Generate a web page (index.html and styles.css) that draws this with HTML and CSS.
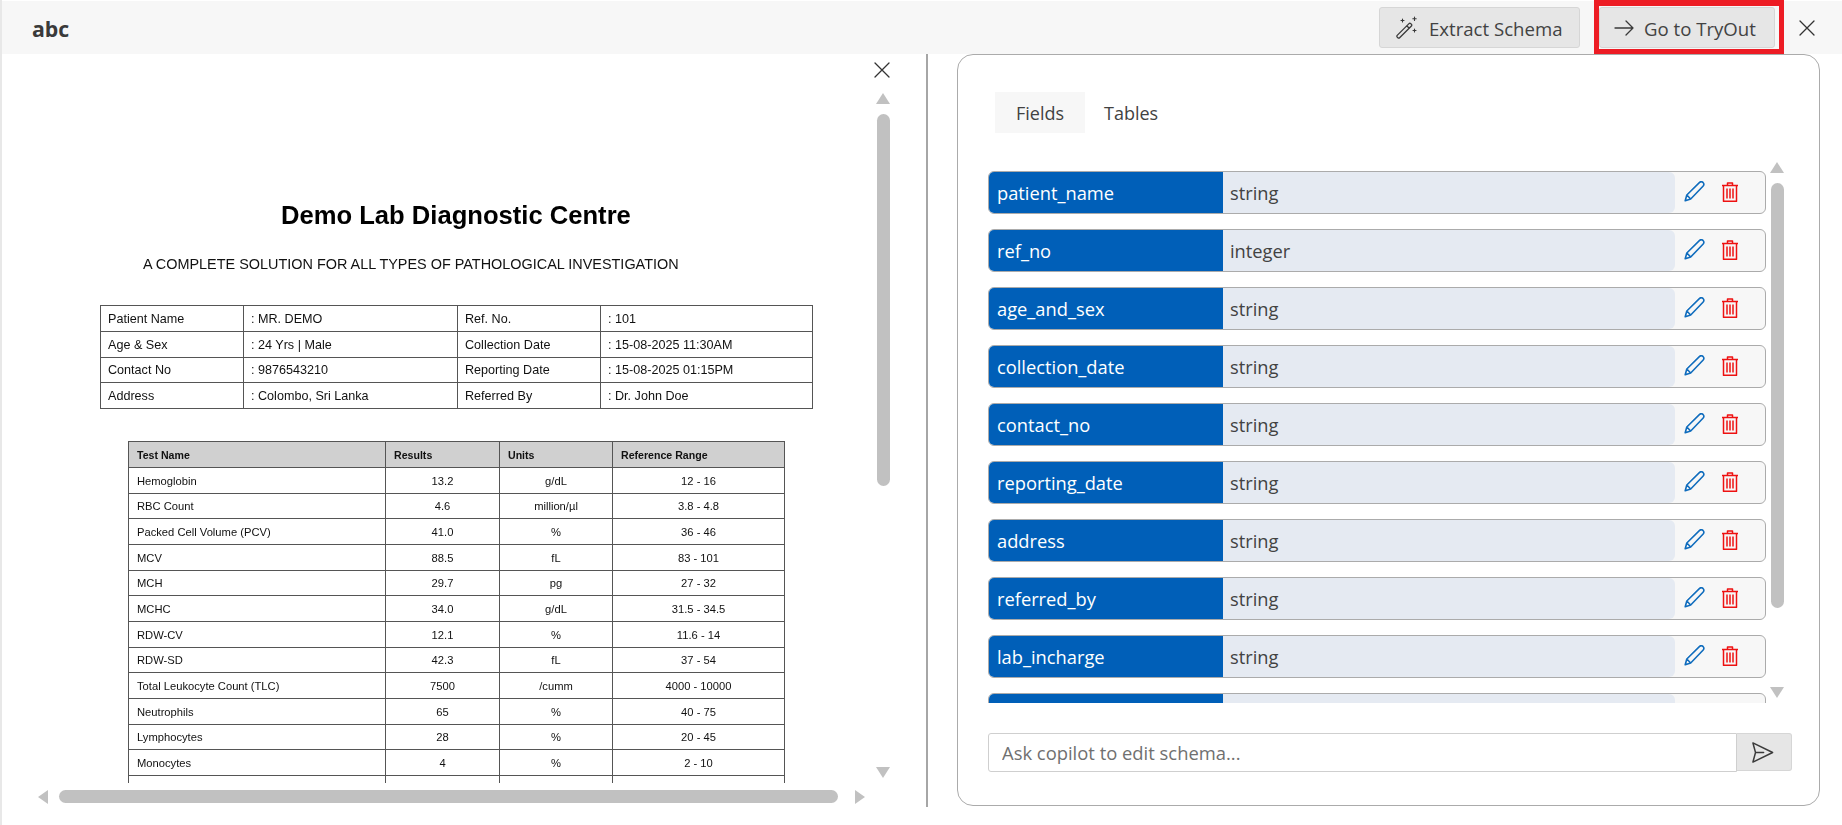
FILE: index.html
```html
<!DOCTYPE html>
<html lang="en">
<head>
<meta charset="utf-8">
<title>abc</title>
<link rel="stylesheet" href="styles.css">
</head>
<body>
<div class="app">
  <header class="topbar">
    <div class="title">abc</div>
    <div class="actions">
      <button class="btn btn-extract">
        <svg class="ico" viewBox="0 0 24 24" fill="none" stroke="#3a3a3a" stroke-width="1.3" stroke-linejoin="round" stroke-linecap="round"><path d="M3.2 19.4 15 7.6a1.2 1.2 0 0 1 1.7 0l.7.7a1.2 1.2 0 0 1 0 1.7L5.6 21.8a1.2 1.2 0 0 1-1.7 0l-.7-.7a1.2 1.2 0 0 1 0-1.7ZM12.8 9.8l2.4 2.4"/><path d="M8.5 3v3M7 4.500h3M20.500 1v3.400M18.800 2.700h3.400M20.500 13v3M19 14.500h3" stroke-width="1.1"/></svg>
        <span>Extract Schema</span>
      </button>
      <div class="highlight">
        <button class="btn btn-tryout">
          <svg class="ico" viewBox="0 0 24 24" fill="none" stroke="#3a3a3a" stroke-width="1.3" stroke-linecap="round" stroke-linejoin="round"><path d="M3 12h18M14 5l7 7-7 7"/></svg>
          <span>Go to TryOut</span>
        </button>
      </div>
      <svg class="close" viewBox="0 0 16 16" fill="none" stroke="#333" stroke-width="1.300" stroke-linecap="round"><path d="M1 1l14 14M15 1 1 15"/></svg>
    </div>
  </header>
  <main class="body">
    <section class="left">
      <div class="viewer">
        <div class="doc">
          <h1 class="doc-title">Demo Lab Diagnostic Centre</h1>
          <p class="doc-tag">A COMPLETE SOLUTION FOR ALL TYPES OF PATHOLOGICAL INVESTIGATION</p>
          <table class="t-info">
            <tr><td class="c1">Patient Name</td><td class="c2">: MR. DEMO</td><td class="c3">Ref. No.</td><td>: 101</td></tr>
            <tr><td>Age &amp; Sex</td><td>: 24 Yrs | Male</td><td>Collection Date</td><td>: 15-08-2025 11:30AM</td></tr>
            <tr><td>Contact No</td><td>: 9876543210</td><td>Reporting Date</td><td>: 15-08-2025 01:15PM</td></tr>
            <tr><td>Address</td><td>: Colombo, Sri Lanka</td><td>Referred By</td><td>: Dr. John Doe</td></tr>
          </table>
          <table class="t-results">
            <tr class="head"><th class="r1">Test Name</th><th class="r2">Results</th><th class="r3">Units</th><th>Reference Range</th></tr>
            <tr><td>Hemoglobin</td><td>13.2</td><td>g/dL</td><td>12 - 16</td></tr>
            <tr><td>RBC Count</td><td>4.6</td><td>million/µl</td><td>3.8 - 4.8</td></tr>
            <tr><td>Packed Cell Volume (PCV)</td><td>41.0</td><td>%</td><td>36 - 46</td></tr>
            <tr><td>MCV</td><td>88.5</td><td>fL</td><td>83 - 101</td></tr>
            <tr><td>MCH</td><td>29.7</td><td>pg</td><td>27 - 32</td></tr>
            <tr><td>MCHC</td><td>34.0</td><td>g/dL</td><td>31.5 - 34.5</td></tr>
            <tr><td>RDW-CV</td><td>12.1</td><td>%</td><td>11.6 - 14</td></tr>
            <tr><td>RDW-SD</td><td>42.3</td><td>fL</td><td>37 - 54</td></tr>
            <tr><td>Total Leukocyte Count (TLC)</td><td>7500</td><td>/cumm</td><td>4000 - 10000</td></tr>
            <tr><td>Neutrophils</td><td>65</td><td>%</td><td>40 - 75</td></tr>
            <tr><td>Lymphocytes</td><td>28</td><td>%</td><td>20 - 45</td></tr>
            <tr><td>Monocytes</td><td>4</td><td>%</td><td>2 - 10</td></tr>
            <tr class="cut"><td></td><td></td><td></td><td></td></tr>
          </table>
        </div>
      </div>
      <div class="vcol">
        <svg class="close close-doc" viewBox="0 0 16 16" fill="none" stroke="#333" stroke-width="1.300" stroke-linecap="round"><path d="M1 1l14 14M15 1 1 15"/></svg>
        <div class="arrow-up"></div>
        <div class="vthumb"></div>
        <div class="arrow-down"></div>
      </div>
      <div class="hbar">
        <div class="arrow-left"></div>
        <div class="hthumb"></div>
        <div class="arrow-right"></div>
      </div>
    </section>
    <div class="divider"></div>
    <section class="card">
      <nav class="tabs">
        <div class="tab active">Fields</div>
        <div class="tab">Tables</div>
      </nav>
      <div class="fields-wrap">
        <div class="fields" id="fields"></div>
        <div class="fscroll">
          <div class="arrow-up"></div>
          <div class="fthumb"></div>
          <div class="arrow-down"></div>
        </div>
      </div>
      <form class="ask">
        <input class="ask-input" type="text" placeholder="Ask copilot to edit schema...">
        <button class="ask-send" type="button">
          <svg class="send" viewBox="0 0 24 24" fill="none" stroke="#3a3a3a" stroke-width="1.300" stroke-linejoin="round" stroke-linecap="round"><path d="M3.500 3.500 21 12 3.500 20.500 5.800 12ZM5.800 12H13"/></svg>
        </button>
      </form>
    </section>
  </main>
</div>
<template id="row">
  <div class="row">
    <div class="name"></div>
    <div class="type"></div>
    <div class="tools">
      <svg class="pencil" viewBox="2 1 21 21" fill="none" stroke="#0f6cbd" stroke-width="1.600" stroke-linejoin="round"><path d="M3.200 20.800 4.800 15 17.600 2.400a2.300 2.300 0 0 1 3.300 0l.3.300a2.300 2.300 0 0 1 0 3.300L8.700 19l-5.500 1.800ZM4.800 15l3.900 4"/></svg>
      <svg class="trash" viewBox="3 2 18 20" fill="none" stroke="#ee1111" stroke-width="1.500" stroke-linejoin="round"><path d="M4 5.500h16M9.500 5.500V3h5v2.500M5.500 5.500v15.800h13V5.500M9 8.500v10M12 8.500v10M15 8.500v10"/></svg>
    </div>
  </div>
</template>
<script>
  var data = [["patient_name","string"],["ref_no","integer"],["age_and_sex","string"],["collection_date","string"],["contact_no","string"],["reporting_date","string"],["address","string"],["referred_by","string"],["lab_incharge","string"],["","" ]];
  var host = document.getElementById("fields"), tpl = document.getElementById("row");
  data.forEach(function (d) {
    var n = tpl.content.cloneNode(true);
    n.querySelector(".name").textContent = d[0];
    n.querySelector(".type").textContent = d[1];
    host.appendChild(n);
  });
</script>
</body>
</html>
```

FILE: styles.css
```css
* { box-sizing: border-box; }
html, body { margin: 0; height: 100%; background: #fff; overflow: hidden; }
body { font-family: "Open Sans", "Noto Sans", sans-serif; color: #424242; }
button, input { font-family: inherit; }

.app { height: 825px; display: flex; flex-direction: column; border-left: 2px solid #e8e8e8; padding-top: 1px; }

.topbar { height: 53px; flex: none; background: #f7f7f7; display: flex; align-items: center; justify-content: space-between; padding-left: 30px; }
.title { font-size: 21.300px; font-weight: 700; color: #3a3a3a; padding-top: 2px; }
.actions { display: flex; align-items: center; height: 100%; }
.btn { display: flex; align-items: center; height: 41px; border: 1px solid #d6d6d6; border-radius: 3px; background: #e6e6e6; color: #424242; font-size: 18.600px; padding: 1px 0 0 0; margin: 0; }
.btn-extract { width: 201px; padding-left: 14px; gap: 11px; margin-right: 14px; }
.btn-tryout { width: 176px; padding-left: 12px; gap: 8px; }
.ico { width: 24px; height: 24px; flex: none; }
.highlight { border: 5px solid #ed1c24; border-top-width: 6px; height: 54px; margin-top: -1px; width: 190px; display: flex; align-items: center; }
.close { width: 16px; height: 16px; flex: none; }
.actions > .close { margin-left: 15px; margin-right: 27px; }

.body { flex: 1; min-height: 0; display: flex; }

.left { width: 924px; flex: none; display: grid; grid-template-columns: 870px 54px; grid-template-rows: 729px 1fr; }
.viewer { overflow: hidden; }
.doc { width: 870px; padding-top: 146px; filter: blur(0.3px); font-family: "Liberation Sans", Arial, sans-serif; color: #111; }
.doc-title { margin: 0 0 0 279px; font-size: 25.600px; line-height: 30px; font-weight: 700; color: #000; white-space: nowrap; }
.doc-tag { margin: 24px 0 0 141px; font-size: 14.430px; line-height: 20px; white-space: nowrap; }

table { border-collapse: collapse; table-layout: fixed; }
.t-info { margin: 31px 0 0 98px; width: 713px; font-size: 12.600px; }
.t-info td { height: 26px; border: 1px solid #555; padding: 0 7px; white-space: nowrap; }
.t-info tr:nth-child(3) td { height: 25px; }
.c1 { width: 143px; }
.c2 { width: 214px; }
.c3 { width: 143px; }

.t-results { margin: 32px 0 0 126px; width: 657px; font-size: 11.200px; }
.t-results th, .t-results td { height: 26px; border: 1px solid #555; padding: 0 8px; white-space: nowrap; text-align: center; }
.t-results tr:nth-child(3n) td { height: 25px; }
.t-results th { text-align: left; background: #d0d0d0; font-size: 10.600px; font-weight: 700; }
.t-results td:first-child { text-align: left; }
.r1 { width: 257px; }
.r2 { width: 114px; }
.r3 { width: 113px; }

.vcol { display: flex; flex-direction: column; align-items: flex-start; padding: 8px 0 0 5px; }
.close-doc { margin: 0 0 15px -3px; }
.vthumb { width: 13px; height: 372px; border-radius: 7px; background: #c1c1c1; margin: 10px 0 281px 0; }
.arrow-up, .arrow-down { width: 0; height: 0; flex: none; border-left: 7px solid transparent; border-right: 7px solid transparent; }
.arrow-up { border-bottom: 11px solid #c1c1c1; }
.arrow-down { border-top: 11px solid #c1c1c1; }
.vcol .arrow-up, .vcol .arrow-down { margin-left: -1px; }

.hbar { grid-column: 1 / span 2; display: flex; align-items: center; padding: 3px 0 0 36px; height: 24px; }
.hthumb { width: 779px; height: 13px; border-radius: 7px; background: #c1c1c1; margin: 0 17px 0 11px; }
.arrow-left, .arrow-right { width: 0; height: 0; border-top: 7px solid transparent; border-bottom: 7px solid transparent; }
.arrow-left { border-right: 10px solid #c1c1c1; }
.arrow-right { border-left: 10px solid #c1c1c1; }

.divider { width: 2px; height: 753px; flex: none; background: #a6a6a6; }

.card { width: 863px; height: 752px; margin-left: 29px; flex: none; border: 1px solid #ababab; border-radius: 16px; padding: 37px 0 0 30px; display: flex; flex-direction: column; }
.tabs { display: flex; height: 41px; padding-left: 7px; }
.tab { font-size: 18px; display: flex; align-items: center; padding: 1px 19px 0; }
.tab.active { width: 90px; background: #f7f7f7; justify-content: center; padding: 1px 0 0; }

.fields-wrap { margin-top: 18px; height: 552px; display: flex; overflow: hidden; }
.fields { width: 778px; flex: none; display: flex; flex-direction: column; gap: 15px; padding-top: 20px; overflow: hidden; }
.row { height: 43px; flex: none; display: flex; background: #f7f7f7; border: 1px solid #ababab; border-radius: 6px; overflow: hidden; }
.name { width: 234px; flex: none; background: #005fb8; color: #fff; font-size: 18.300px; display: flex; align-items: center; padding-left: 8px; }
.type { width: 452px; flex: none; background: #e5eaf2; border-radius: 0 6px 6px 0; font-size: 18.300px; display: flex; align-items: center; padding-left: 7px; }
.tools { display: flex; align-items: center; gap: 16px; padding-left: 9px; margin-top: -2px; }
.pencil { width: 21px; height: 21px; flex: none; }
.trash { width: 18px; height: 20px; flex: none; }

.fscroll { display: flex; flex-direction: column; align-items: center; width: 14px; margin-left: 4px; padding-top: 11px; }
.fthumb { width: 13px; height: 425px; flex: none; border-radius: 7px; background: #c1c1c1; margin: 10px 0 79px; }

.ask { display: flex; margin-top: 30px; width: 804px; height: 39px; }
.ask-input { width: 749px; height: 39px; border: 1px solid #cfcfcf; border-radius: 3px 0 0 3px; padding: 0 13px; font-size: 18.400px; color: #424242; outline: none; background: #fff; }
.ask-input::placeholder { color: #707070; opacity: 1; }
.ask-send { width: 55px; height: 38px; border: 1px solid #d6d6d6; border-left: none; border-radius: 0 3px 3px 0; background: #e6e6e6; display: flex; align-items: center; justify-content: center; padding: 0 3px 0 0; }
.send { width: 27px; height: 27px; flex: none; }
```
